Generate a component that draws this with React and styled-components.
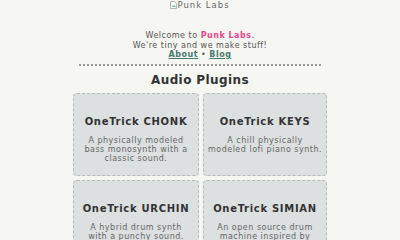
import styled, { createGlobalStyle } from "styled-components";

const Global = createGlobalStyle`
  html, body {
    margin: 0;
    padding: 0;
    background: #f6f6f3;
  }
  body {
    font-family: "DejaVu Sans", Verdana, sans-serif;
    color: #555;
  }
`;

const plugins = [
  { name: "OneTrick CHONK", desc: ["A physically modeled", "bass monosynth with a", "classic sound."] },
  { name: "OneTrick KEYS", desc: ["A chill physically", "modeled lofi piano synth."] },
  { name: "OneTrick URCHIN", desc: ["A hybrid drum synth", "with a punchy sound."] },
  { name: "OneTrick SIMIAN", desc: ["An open source drum", "machine inspired by", "the classics."] },
];

export default function App() {
  return (
    <Page>
      <Global />
      <Logo>
        <BrokenIcon width="7" height="8" viewBox="0 0 7 8">
          <path d="M0.5 0.5h4l2 2v5h-6z" fill="#fff" stroke="#9aa" strokeWidth="0.8" />
          <path d="M1.5 6l1.5-2 1 1 1-1.5 0.8 2.5z" fill="#7c9" />
        </BrokenIcon>
        Punk Labs
      </Logo>
      <Intro>
        Welcome to <Brand>Punk Labs</Brand>.<br />
        We're tiny and we make stuff!<br />
        <NavLink href="#">About</NavLink> • <NavLink href="#">Blog</NavLink>
      </Intro>
      <Divider />
      <Heading>Audio Plugins</Heading>
      <Grid>
        {plugins.map((p) => (
          <Card key={p.name}>
            <CardTitle>{p.name}</CardTitle>
            <CardDesc>
              {p.desc.map((line) => (
                <DescLine key={line}>{line}</DescLine>
              ))}
            </CardDesc>
          </Card>
        ))}
      </Grid>
    </Page>
  );
}

const Page = styled.div`
  display: flex;
  flex-direction: column;
  align-items: center;
`;

const Logo = styled.div`
  height: 31px;
  font-size: 8.5px;
  letter-spacing: 1px;
  line-height: 10px;
  color: #666;
  display: flex;
  align-items: flex-start;
`;

const BrokenIcon = styled.svg`
  margin-top: 1px;
`;

const Intro = styled.p`
  margin: 0;
  text-align: center;
  font-size: 8px;
  letter-spacing: 0.5px;
  line-height: 9.5px;
  color: #555;
`;

const Brand = styled.span`
  color: #e8488a;
  font-weight: bold;
`;

const NavLink = styled.a`
  color: #4a7a70;
  font-weight: bold;
  text-decoration: underline;
`;

const Divider = styled.div`
  width: 242px;
  margin-top: 4px;
  border-top: 2px dotted #999;
`;

const Heading = styled.h2`
  margin: 6px 0 5px;
  font-size: 12px;
  letter-spacing: 0.4px;
  line-height: 16px;
  color: #333;
  font-weight: bold;
`;

const Grid = styled.div`
  display: grid;
  grid-template-columns: 126px 124px;
  gap: 4px;
`;

const Card = styled.div`
  height: 83px;
  box-sizing: border-box;
  background: #dce0e0;
  border: 1px dashed #b5b9b9;
  border-radius: 4px;
  display: flex;
  flex-direction: column;
  align-items: center;
  padding: 21px 2px 0;
  text-align: center;
`;

const CardTitle = styled.div`
  font-size: 10px;
  letter-spacing: 0.7px;
  font-weight: bold;
  color: #333;
  line-height: 13px;
  margin-bottom: 8px;
`;

const CardDesc = styled.div`
  display: flex;
  flex-direction: column;
  align-items: center;
  font-size: 8px;
  letter-spacing: 0.5px;
  line-height: 9px;
  color: #666;
`;

const DescLine = styled.span`
  white-space: nowrap;
`;
